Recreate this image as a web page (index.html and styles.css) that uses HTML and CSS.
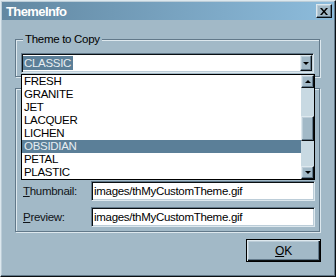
FILE: index.html
```html
<!DOCTYPE html>
<html>
<head>
<meta charset="utf-8">
<link rel="stylesheet" href="styles.css">
</head>
<body>
<div class="window">
  <div class="titlebar">
    <span class="title">ThemeInfo</span>
    <div class="close btn3d">
      <svg width="8" height="7" viewBox="0 0 8 7"><path d="M0 0h2l2 2.5 2-2.5h2l-3 3.5 3 3.5h-2l-2-2.5-2 2.5h-2l3-3.5z" fill="#000"/></svg>
    </div>
  </div>
  <div class="content">
    <fieldset class="group group-copy">
      <legend class="legend">Theme to Copy</legend>
      <div class="combo">
        <div class="combo-field"><span class="combo-sel">CLASSIC</span></div>
        <div class="drop btn3d"><span class="arrow-down"></span></div>
        <div class="list">
          <ul class="items">
            <li class="item">FRESH</li>
            <li class="item">GRANITE</li>
            <li class="item">JET</li>
            <li class="item">LACQUER</li>
            <li class="item">LICHEN</li>
            <li class="item item-sel">OBSIDIAN</li>
            <li class="item">PETAL</li>
            <li class="item">PLASTIC</li>
          </ul>
          <div class="scrollbar">
            <div class="sbtn btn3d"><span class="arrow-up"></span></div>
            <div class="track track-top"></div>
            <div class="thumb btn3d"></div>
            <div class="track track-bottom"></div>
            <div class="sbtn btn3d"><span class="arrow-down"></span></div>
          </div>
        </div>
      </div>
    </fieldset>
    <fieldset class="group group-info">
      <div class="row">
        <span class="label"><u>T</u>humbnail:</span>
        <div class="textbox">images/thMyCustomTheme.gif</div>
      </div>
      <div class="row">
        <span class="label"><u>P</u>review:</span>
        <div class="textbox">images/thMyCustomTheme.gif</div>
      </div>
    </fieldset>
    <div class="actions">
      <div class="ok"><u>O</u>K</div>
    </div>
  </div>
</div>
</body>
</html>
```
FILE: styles.css
```css
html, body {
  margin: 0;
  padding: 0;
  background: #a2b9c7;
}
body {
  font-family: "Liberation Sans", Arial, sans-serif;
  font-size: 11.5px;
  letter-spacing: -0.3px;
  color: #000;
}
.window {
  position: relative;
  box-sizing: border-box;
  width: 336px;
  height: 277px;
  background: #a2b9c7;
  border: 1px solid;
  border-color: #dde8ee #0a0f12 #0a0f12 #dde8ee;
  box-shadow: inset -1px -1px 0 #62798a, inset 1px 1px 0 #bccdd8;
  padding: 1px;
}
.titlebar {
  height: 18px;
  display: flex;
  align-items: center;
  justify-content: space-between;
  padding: 0 2px 0 4px;
  background: linear-gradient(to right, #6288a2, #8dbcdc);
}
.title {
  color: #fff;
  font-weight: bold;
  font-size: 13px;
  letter-spacing: -0.6px;
}
.btn3d {
  box-sizing: border-box;
  background: #a2b9c7;
  border: 1px solid;
  border-color: #dde8ee #0a0f12 #0a0f12 #dde8ee;
  box-shadow: inset -1px -1px 0 #62798a, inset 1px 1px 0 #bccdd8;
}
.close {
  width: 16px;
  height: 14px;
  display: flex;
  align-items: center;
  justify-content: center;
}
.content {
  padding: 13px 13px 0 13px;
}
.group {
  margin: 0 1px 0 0;
  border: 1px solid #62798a;
  box-shadow: inset 1px 1px 0 #dde8ee, 1px 1px 0 #dde8ee;
  min-width: 0;
}
.group-copy {
  padding: 7px 5px 3px 5px;
}
.legend {
  margin-left: 2px;
  padding: 0 2px;
  line-height: 13px;
  background: #a2b9c7;
}
.combo {
  position: relative;
  box-sizing: border-box;
  height: 20px;
  display: flex;
  background: #fff;
  border: 1px solid;
  border-color: #62798a #dde8ee #dde8ee #62798a;
  box-shadow: inset 1px 1px 0 #0a0f12, inset -1px -1px 0 #bccdd8;
  padding: 1px;
}
.combo-field {
  flex: 1;
  display: flex;
  align-items: center;
}
.combo-sel {
  background: #5b7f98;
  color: #e6edf1;
  line-height: 14px;
  padding: 0 2px 0 1px;
}
.drop {
  width: 12px;
  height: 16px;
  display: flex;
  align-items: center;
  justify-content: center;
}
.arrow-down, .arrow-up {
  width: 0;
  height: 0;
  border-left: 3px solid transparent;
  border-right: 3px solid transparent;
}
.arrow-down {
  border-top: 3px solid #000;
}
.arrow-up {
  border-bottom: 3px solid #000;
}
.list {
  position: absolute;
  z-index: 10;
  left: -1px;
  top: 20px;
  width: 294px;
  box-sizing: border-box;
  border: 1px solid #000;
  background: #fff;
  display: flex;
}
.items {
  flex: 1;
  list-style: none;
  margin: 0;
  padding: 0;
}
.item {
  height: 13px;
  line-height: 13px;
  padding-left: 2px;
}
.item-sel {
  background: #5b7f98;
  color: #e6edf1;
}
.scrollbar {
  width: 13px;
  display: flex;
  flex-direction: column;
  background: #c8d9e2;
}
.sbtn {
  height: 13px;
  display: flex;
  align-items: center;
  justify-content: center;
}
.track {
  flex: none;
}
.track-top {
  height: 28px;
}
.thumb {
  height: 25px;
}
.track-bottom {
  height: 25px;
}
.group-info {
  margin-top: 11px;
  padding: 92px 4px 4px 7px;
  display: flex;
  flex-direction: column;
  gap: 6px;
}
.row {
  display: flex;
  align-items: center;
  height: 20px;
}
.label {
  width: 68px;
  color: #101418;
}
.textbox {
  flex: 1;
  box-sizing: border-box;
  height: 20px;
  line-height: 16px;
  padding: 1px 2px;
  background: #fff;
  border: 1px solid;
  border-color: #62798a #dde8ee #dde8ee #62798a;
  box-shadow: inset 1px 1px 0 #0a0f12, inset -1px -1px 0 #bccdd8;
}
.actions {
  display: flex;
  justify-content: flex-end;
  margin-top: 7px;
}
.ok {
  box-sizing: border-box;
  width: 75px;
  height: 23px;
  display: flex;
  align-items: center;
  justify-content: center;
  background: #a2b9c7;
  border: 1px solid #000;
  box-shadow: inset 1px 1px 0 #dde8ee, inset -1px -1px 0 #0a0f12, inset -2px -2px 0 #62798a, inset 2px 2px 0 #bccdd8;
  font-size: 12px;
}
```
